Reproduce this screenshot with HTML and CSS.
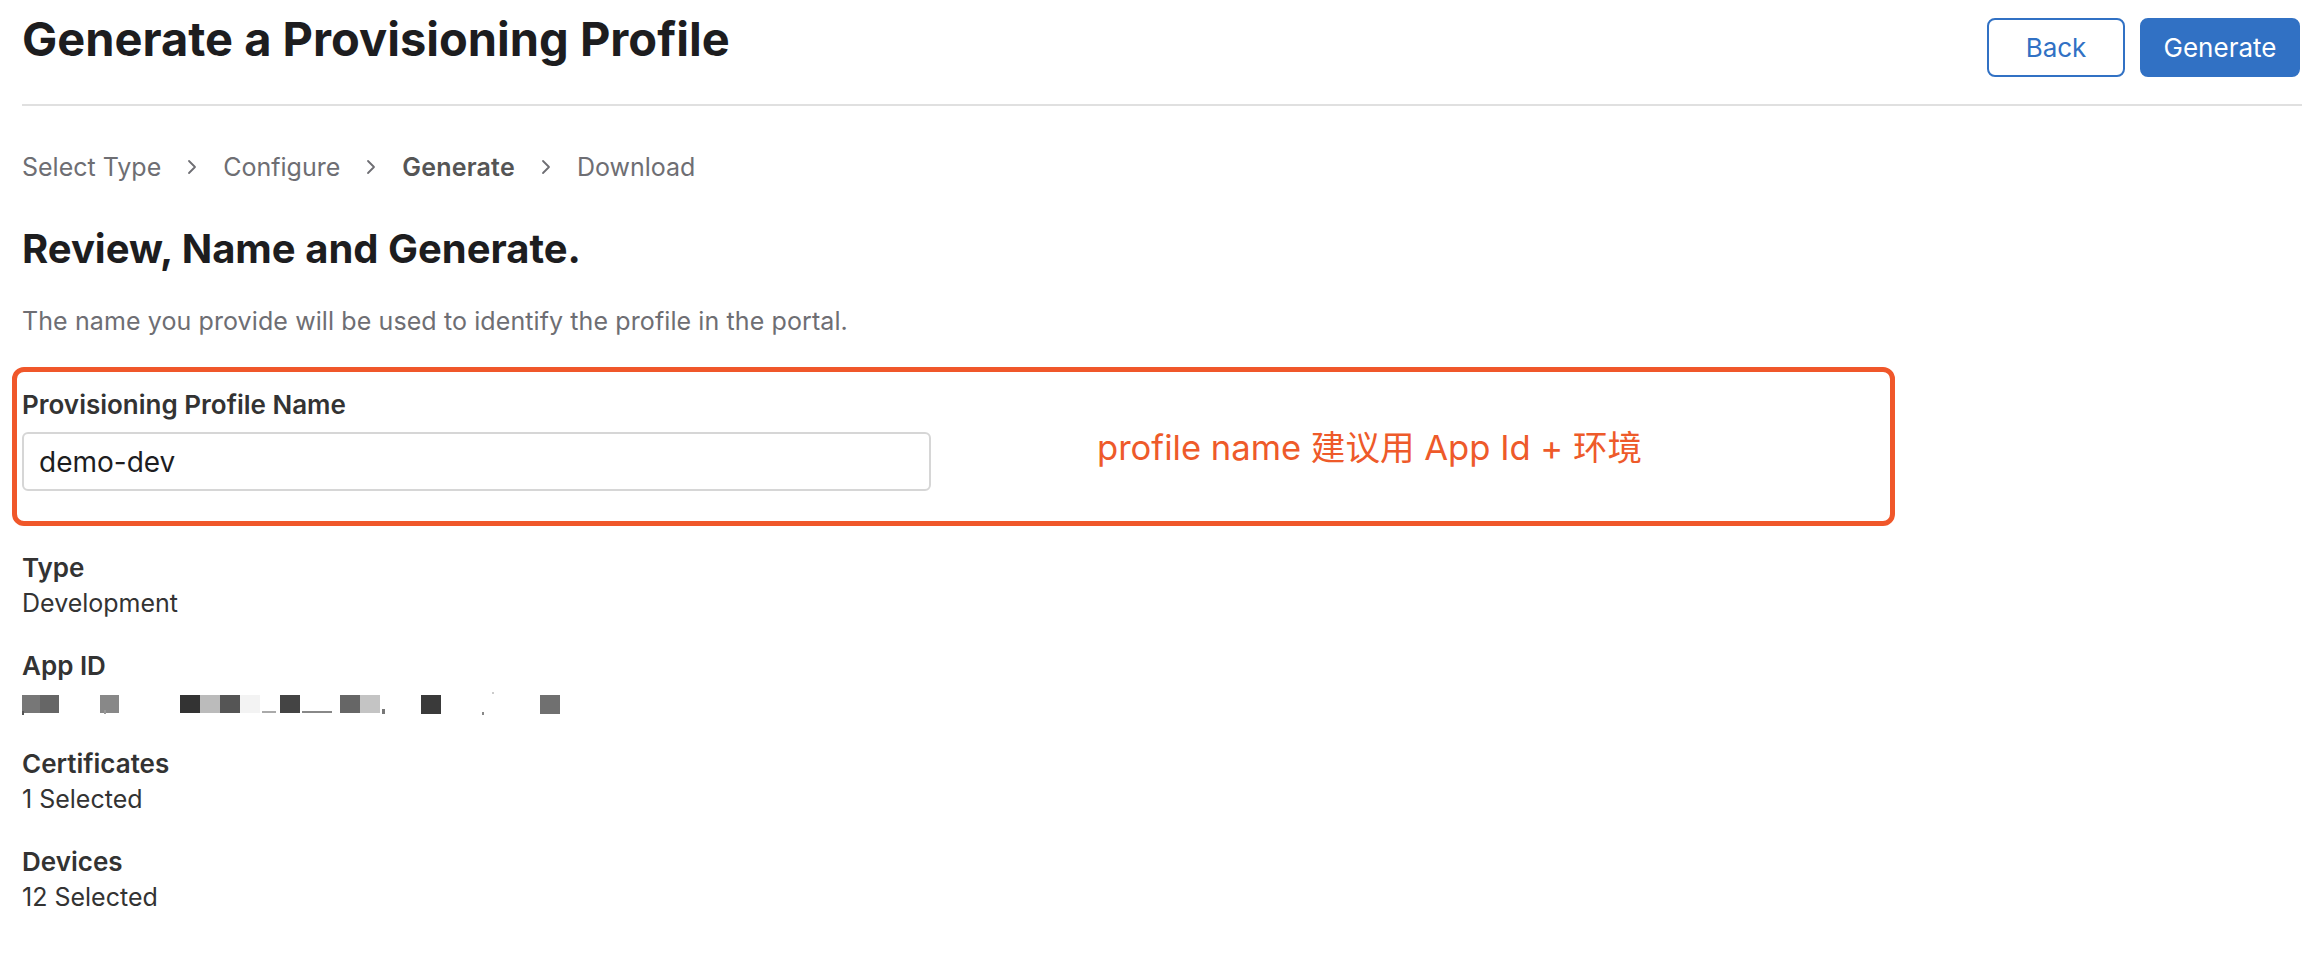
FILE: index.html
```html
<!DOCTYPE html>
<html lang="en">
<head>
<meta charset="utf-8">
<title>Generate a Provisioning Profile</title>
<link rel="stylesheet" href="styles.css">
</head>
<body>
<main class="page">
  <header class="header">
    <h1 class="title">Generate a Provisioning Profile</h1>
    <div class="actions">
      <button class="btn btn-outline">Back</button>
      <button class="btn btn-primary">Generate</button>
    </div>
  </header>

  <nav class="crumbs">
    <span class="crumb">Select Type</span>
    <svg class="chev" viewBox="0 0 10 16" width="10" height="16"><polyline points="2,2 8,8 2,14"/></svg>
    <span class="crumb">Configure</span>
    <svg class="chev" viewBox="0 0 10 16" width="10" height="16"><polyline points="2,2 8,8 2,14"/></svg>
    <span class="crumb crumb-current">Generate</span>
    <svg class="chev" viewBox="0 0 10 16" width="10" height="16"><polyline points="2,2 8,8 2,14"/></svg>
    <span class="crumb">Download</span>
  </nav>

  <h2 class="section-title">Review, Name and Generate.</h2>
  <p class="desc">The name you provide will be used to identify the profile in the portal.</p>

  <section class="annot">
    <div class="field">
      <label class="field-label" for="pname">Provisioning Profile Name</label>
      <input class="field-input" id="pname" type="text" value="demo-dev">
    </div>
    <p class="note">profile name 建议用 App Id + 环境</p>
  </section>

  <dl class="details">
    <div class="item">
      <dt>Type</dt>
      <dd>Development</dd>
    </div>
    <div class="item">
      <dt>App ID</dt>
      <dd>
        <svg class="pixels" viewBox="0 0 560 35" width="560" height="35">
          <rect x="0" y="11" width="18" height="18" fill="#777"/>
          <rect x="18" y="11" width="19" height="18" fill="#666"/>
          <rect x="78" y="11" width="19" height="18" fill="#888"/>
          <rect x="158" y="11" width="20" height="18" fill="#333"/>
          <rect x="178" y="11" width="20" height="18" fill="#bbb"/>
          <rect x="198" y="11" width="20" height="18" fill="#555"/>
          <rect x="218" y="11" width="20" height="18" fill="#f3f3f3"/>
          <rect x="258" y="11" width="20" height="18" fill="#444"/>
          <rect x="318" y="11" width="20" height="18" fill="#666"/>
          <rect x="338" y="11" width="20" height="18" fill="#c4c4c4"/>
          <rect x="399" y="11" width="20" height="19" fill="#3a3a3a"/>
          <rect x="518" y="11" width="20" height="19" fill="#707070"/>
          <rect x="0" y="27" width="2" height="4" fill="#555"/>
          <rect x="82" y="26" width="2" height="4" fill="#999"/>
          <rect x="240" y="27" width="14" height="2" fill="#aaa"/>
          <rect x="280" y="27" width="30" height="2" fill="#888"/>
          <rect x="360" y="25" width="3" height="5" fill="#777"/>
          <rect x="470" y="8" width="2" height="2" fill="#ccc"/>
          <rect x="460" y="28" width="2" height="3" fill="#888"/>
        </svg>
      </dd>
    </div>
    <div class="item">
      <dt>Certificates</dt>
      <dd>1 Selected</dd>
    </div>
    <div class="item">
      <dt>Devices</dt>
      <dd>12 Selected</dd>
    </div>
  </dl>
</main>
</body>
</html>
```

FILE: styles.css
```css
* {
  box-sizing: border-box;
}

html, body {
  margin: 0;
  padding: 0;
  background: #ffffff;
}

body {
  font-family: Inter, "Noto Sans", "Noto Sans CJK SC", sans-serif;
  color: #333333;
}

.page {
  padding: 0 22px;
}

.header {
  display: flex;
  justify-content: space-between;
  align-items: flex-start;
  padding: 12px 0 27px;
  border-bottom: 2px solid #e0e0e0;
}

.title {
  margin: 0;
  font-size: 47px;
  line-height: 54px;
  font-weight: 700;
  letter-spacing: 0;
  color: #1d1d1f;
}

.actions {
  display: flex;
  gap: 15px;
  margin-top: 6px;
  margin-right: 2px;
}

.btn {
  height: 59px;
  border-radius: 8px;
  font-family: Inter, sans-serif;
  font-size: 26px;
  font-weight: 400;
  cursor: pointer;
}

.btn-outline {
  width: 138px;
  border: 2px solid #3171c4;
  background: #ffffff;
  color: #3171c4;
}

.btn-primary {
  width: 160px;
  border: 2px solid #3171c4;
  background: #3171c4;
  color: #ffffff;
}

.crumbs {
  display: flex;
  align-items: center;
  gap: 26px;
  margin-top: 46px;
  font-size: 25px;
  line-height: 30px;
  color: #6e6e73;
}

.chev {
  fill: none;
  stroke: #6e6e73;
  stroke-width: 1.8;
  stroke-linecap: round;
  stroke-linejoin: round;
}

.crumb-current {
  font-weight: 600;
  color: #555555;
  letter-spacing: 0.2px;
}

.section-title {
  margin: 44px 0 0;
  font-size: 40px;
  line-height: 46px;
  font-weight: 700;
  letter-spacing: 0;
  color: #1d1d1f;
}

.desc {
  margin: 34px 0 0;
  font-size: 25px;
  line-height: 30px;
  letter-spacing: 0.1px;
  color: #6e6e73;
}

.annot {
  display: flex;
  align-items: center;
  gap: 166px;
  width: 1883px;
  margin: 31px 0 0 -10px;
  padding: 18px 0 30px 5px;
  border: 5px solid #f0572a;
  border-radius: 12px;
}

.field {
  display: flex;
  flex-direction: column;
  gap: 12px;
}

.field-label {
  font-size: 26px;
  line-height: 30px;
  font-weight: 600;
  color: #333333;
}

.field-input {
  width: 909px;
  height: 59px;
  padding: 0 15px;
  border: 2px solid #d6d6d6;
  border-radius: 6px;
  font-family: Inter, sans-serif;
  font-size: 28px;
  color: #1d1d1f;
  outline: none;
}

.note {
  margin: 12px 0 0;
  font-family: Inter, "Noto Sans CJK SC", sans-serif;
  font-size: 34.6px;
  line-height: 40px;
  color: #ee5a2a;
}

.details {
  display: flex;
  flex-direction: column;
  gap: 27px;
  margin: 24px 0 0;
}

.item dt {
  font-size: 26px;
  line-height: 36px;
  font-weight: 600;
  color: #333333;
}

.item dd {
  margin: 0;
  font-size: 25px;
  line-height: 35px;
  color: #333333;
  height: 35px;
}

.pixels {
  display: block;
}
```
